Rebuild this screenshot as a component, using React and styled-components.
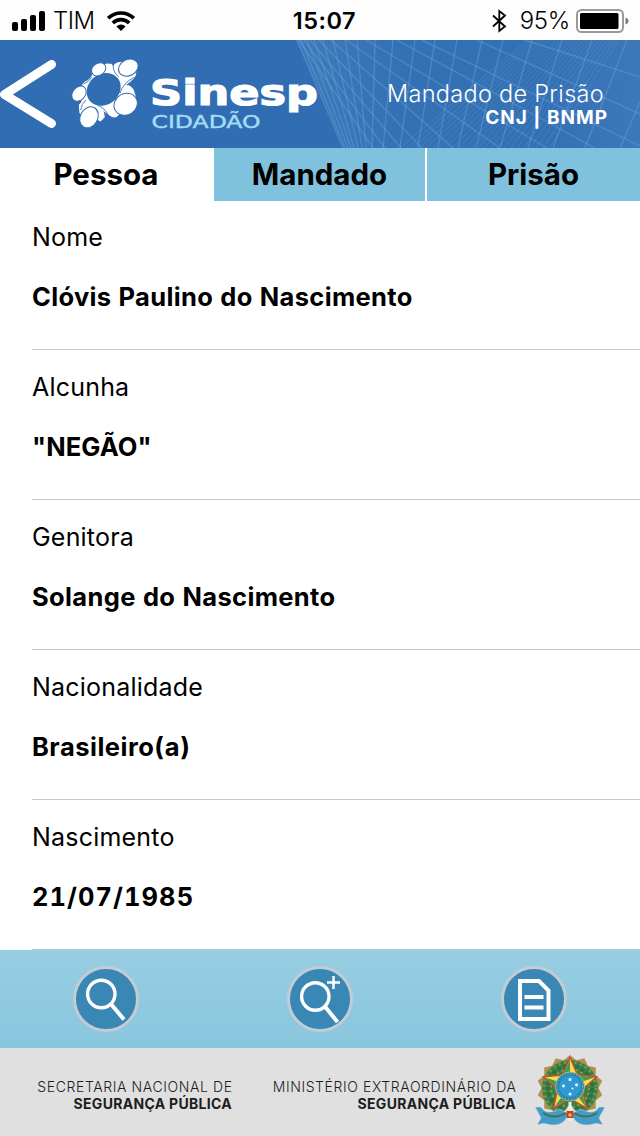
import React from "react";
import styled, { createGlobalStyle } from "styled-components";

const GlobalStyle = createGlobalStyle`
  * {
    box-sizing: border-box;
  }
  body {
    margin: 0;
    background: #fff;
    color: #000;
    font-family: Inter, "Liberation Sans", sans-serif;
  }
  svg {
    display: block;
    flex: none;
  }
`;

const Screen = styled.div`
  width: 640px;
  height: 1136px;
  display: flex;
  flex-direction: column;
  overflow: hidden;
`;

const StatusBar = styled.div`
  height: 40px;
  flex: none;
  display: grid;
  grid-template-columns: 1fr auto 1fr;
  align-items: center;
  padding: 0 11px 0 12px;
  background: #fdfdfd;
`;
const StatusGroup = styled.div`
  display: flex;
  align-items: center;
  justify-content: ${(props) => (props.$end ? "flex-end" : "flex-start")};
`;
const Carrier = styled.span`
  font-size: 24px;
  font-weight: 300;
  line-height: 40px;
  margin: 0 12px 0 8px;
  letter-spacing: -0.5px;
`;
const Clock = styled.span`
  font-size: 23.5px;
  font-weight: 600;
  line-height: 42px;
  letter-spacing: 0.5px;
  margin-left: 8px;
`;
const BatteryLevel = styled.span`
  font-size: 24px;
  font-weight: 300;
  line-height: 40px;
  letter-spacing: -0.3px;
  margin: 0 6px 0 13px;
`;

const HeaderBar = styled.header`
  height: 108px;
  flex: none;
  position: relative;
  display: flex;
  background: #316db2;
  color: #fff;
`;
const MeshLayer = styled.svg`
  position: absolute;
  top: 0;
  right: 0;
`;
const BackButton = styled.button`
  width: 70px;
  padding: 0;
  border: 0;
  background: none;
`;
const Brand = styled.div`
  display: flex;
`;
const Heading = styled.div`
  position: relative;
  flex: 1;
  text-align: right;
  padding: 40px 33px 0 0;
`;
const Title = styled.div`
  font-size: 23.5px;
  font-weight: 300;
  line-height: 28px;
  padding-right: 3px;
  letter-spacing: 0.3px;
`;
const Subtitle = styled.div`
  font-size: 19px;
  font-weight: 700;
  line-height: 19px;
  letter-spacing: 1px;
  margin-right: -1px;
`;

const Tabs = styled.nav`
  height: 53px;
  flex: none;
  display: grid;
  grid-template-columns: 212px 211px 213px;
  column-gap: 2px;
`;
const Tab = styled.button`
  border: 0;
  padding: 0;
  font-family: inherit;
  font-size: 29.5px;
  font-weight: 700;
  line-height: 53px;
  color: #000;
  background: ${(props) => (props.$active ? "#fff" : "#80c2dd")};
`;

const List = styled.main`
  flex: none;
  margin-top: -1px;
  padding-left: 32px;
`;
const Field = styled.div`
  height: 150px;
  padding-top: 22px;
  border-bottom: 1px solid #c8c7cc;
`;
const Label = styled.div`
  font-size: 25px;
  line-height: 30px;
  letter-spacing: 0.2px;
`;
const Value = styled.div`
  font-size: 25.5px;
  font-weight: 700;
  line-height: 30px;
  margin-top: 30px;
  letter-spacing: ${(props) => props.$spacing}px;
  font-variant-numeric: tabular-nums;
`;

const Toolbar = styled.div`
  height: 98px;
  flex: none;
  display: grid;
  grid-template-columns: repeat(3, 214px);
  justify-content: center;
  justify-items: center;
  align-items: center;
  background: linear-gradient(#97cde3, #89c6de);
`;
const RoundButton = styled.button`
  width: 66px;
  height: 66px;
  padding: 0;
  border: 3px solid #c3cbd3;
  border-radius: 50%;
  background: #3987b5;
`;

const FooterBar = styled.footer`
  height: 88px;
  flex: none;
  display: flex;
  background: #e0e0e0;
  color: #1d1d1f;
`;
const Department = styled.div`
  width: ${(props) => props.$width}px;
  padding-top: 30px;
  text-align: right;
  font-size: 14px;
  line-height: 17px;
  white-space: nowrap;
`;
const Thin = styled.div`
  font-weight: 350;
  letter-spacing: 0.6px;
  margin-right: -0.6px;
`;
const Strong = styled.div`
  font-weight: 700;
  letter-spacing: 0.3px;
`;
const Spacer = styled.div`
  width: 14px;
`;

const fields = [
  { label: "Nome", value: "Clóvis Paulino do Nascimento", spacing: 0.33 },
  { label: "Alcunha", value: '"NEGÃO"', spacing: 0.1 },
  { label: "Genitora", value: "Solange do Nascimento", spacing: 0.35 },
  { label: "Nacionalidade", value: "Brasileiro(a)", spacing: 0.5 },
  { label: "Nascimento", value: "21/07/1985", spacing: 1.05 },
];

const Signal = () => (
  <svg width="33" height="20" viewBox="0 0 33 20">
    <rect x="0" y="11" width="6" height="9" rx="2" />
    <rect x="9" y="8" width="6" height="12" rx="2" />
    <rect x="18" y="4" width="6" height="16" rx="2" />
    <rect x="27" y="0" width="6" height="20" rx="2" />
  </svg>
);

const Wifi = () => (
  <svg width="28" height="20" viewBox="0 0 28 20">
    <g fill="none" stroke="#000" strokeWidth="3.6">
      <path d="M1.2 7.2a18.2 18.2 0 0 1 25.6 0" />
      <path d="M5.8 12a11.6 11.6 0 0 1 16.4 0" />
    </g>
    <path d="M14 20l-4.6-4.6a6.5 6.5 0 0 1 9.2 0z" />
  </svg>
);

const Bluetooth = () => (
  <svg width="15" height="24" viewBox="0 0 15 24">
    <path
      d="M1 6.5l12 11L7.3 22V2L13 6.5 1 17.5"
      fill="none"
      stroke="#000"
      strokeWidth="1.8"
    />
  </svg>
);

const Battery = () => (
  <svg width="53" height="24" viewBox="0 0 53 24">
    <rect x="1" y="1" width="46" height="22" rx="4.5" fill="#fff" stroke="#9b9b9b" strokeWidth="2" />
    <rect x="4" y="4" width="38.5" height="16" rx="1.5" />
    <path d="M49.5 8.5c4 1.5 4 5.5 0 7z" fill="#777" />
  </svg>
);

// [x at the top edge, x at the bottom edge]
const steepLines = [
  [2, 48], [6, 50], [12, 53], [19, 56], [28, 59], [38, 63], [50, 67], [62, 71],
  [80, 77], [98, 88], [120, 105], [140, 123], [162, 143], [187, 163],
  [208, 181], [237, 205], [267, 233], [297, 258], [332, 290], [372, 325],
];
const slantedLines = [
  [4, 78], [9, 90], [15, 106], [24, 127], [36, 158], [51, 205], [71, 252],
  [102, 300], [127, 349], [182, 420], [230, 566],
];

const Mesh = () => (
  <MeshLayer width="345" height="108" viewBox="0 0 345 108">
    <defs>
      <linearGradient id="haze" x1="0" x2="1" y1="0" y2="0">
        <stop offset="0" stopColor="#5b97cf" stopOpacity="0.3" />
        <stop offset="0.3" stopColor="#5b97cf" stopOpacity="0.08" />
        <stop offset="0.7" stopColor="#5b97cf" stopOpacity="0.05" />
        <stop offset="1" stopColor="#5b97cf" stopOpacity="0.25" />
      </linearGradient>
    </defs>
    <path d="M1 0H345V108H48Q30 64 1 0z" fill="url(#haze)" />
    <g stroke="#6ba4d9" strokeOpacity="0.42" strokeWidth="1.4">
      {steepLines.concat(slantedLines).map(([top, bottom], i) => (
        <line key={i} x1={top} y1="0" x2={bottom} y2="108" />
      ))}
    </g>
    <g stroke="#6ba4d9" strokeOpacity="0.28">
      {Array.from({ length: 24 }, (_, i) => (
        <line key={i} x1={105 + i * 6.5} y1="108" x2={232 + i * 4} y2="0" />
      ))}
    </g>
  </MeshLayer>
);

const BackArrow = () => (
  <svg width="60" height="108" viewBox="0 0 60 108">
    <path
      d="M51.5 24.5L4.5 54.5L51.5 83.5"
      fill="none"
      stroke="#fff"
      strokeWidth="9"
      strokeLinecap="round"
      strokeLinejoin="round"
    />
  </svg>
);

const Ring = () => (
  <svg width="72" height="108" viewBox="30 -30 216 324">
    <path
      d="M72 98Q95 88 98 72L132 48L138 42L155 43L160 54Q160 38 185 37L228 60L226 76Q220 90 194 106Q212 105 220 120L226 140L170 200Q158 205 144 192L128 180Q136 203 130 205L121 213L108 205L60 190L58 165L64 158L76 125Q62 105 72 98Z"
      fill="#fff"
      stroke="#fff"
      strokeWidth="3"
    />
    <ellipse cx="131" cy="118" rx="54" ry="46" transform="rotate(-38 131 118)" fill="#316db2" />
    <g fill="none" stroke="#316db2" strokeWidth="2.5">
      <path d="M160 42Q157 66 176 80" />
      <path d="M222 82Q188 100 180 130" />
      <path d="M112 166Q134 172 146 198" />
      <path d="M70 102Q86 98 95 82" />
      <path d="M78 150Q64 162 62 180" />
    </g>
    <g fill="#fff" stroke="#316db2" strokeWidth="3">
      <ellipse cx="116" cy="58" rx="23" ry="18" transform="rotate(-35 116 58)" />
      <ellipse cx="205" cy="53" rx="31" ry="24" transform="rotate(-28 205 53)" />
      <ellipse cx="57" cy="131" rx="25" ry="19" transform="rotate(-50 57 131)" />
      <ellipse cx="197" cy="163" rx="36" ry="32" transform="rotate(-30 197 163)" />
      <ellipse cx="87" cy="202" rx="33" ry="26" transform="rotate(-60 87 202)" />
    </g>
  </svg>
);

const Wordmark = () => (
  <svg width="182" height="108" viewBox="142 40 182 108" fontFamily="DejaVu Sans">
    <text
      x="150"
      y="104.5"
      fontSize="36"
      fontWeight="700"
      fill="#fff"
      stroke="#fff"
      strokeWidth="1.2"
      textLength="168"
      lengthAdjust="spacingAndGlyphs"
    >
      Sinesp
    </text>
    <text
      x="151.5"
      y="127.5"
      fontSize="17"
      fill="#a3dcf7"
      stroke="#a3dcf7"
      strokeWidth="0.4"
      textLength="109"
      lengthAdjust="spacingAndGlyphs"
    >
      CIDADÃO
    </text>
  </svg>
);

const SearchIcon = () => (
  <svg width="60" height="60" viewBox="0 0 60 60" fill="none" stroke="#fff">
    <circle cx="25.3" cy="25" r="13.7" strokeWidth="3.4" />
    <path d="M34.5 34.5L48 50.5" strokeWidth="4" />
  </svg>
);

const SearchPlusIcon = () => (
  <svg width="60" height="60" viewBox="0 0 60 60" fill="none" stroke="#fff">
    <circle cx="25.3" cy="27.5" r="13.7" strokeWidth="3.4" />
    <path d="M34.5 37L47.5 53" strokeWidth="4" />
    <path d="M43.5 7v13M37 13.5h13" strokeWidth="2.4" />
  </svg>
);

const DocumentIcon = () => (
  <svg width="60" height="60" viewBox="0 0 60 60" fill="none" stroke="#fff" strokeWidth="4">
    <path d="M16 12H35L44.5 21.5V50H16z" />
    <path d="M20.5 28H39.5M20.5 38.5H39.5" />
  </svg>
);

const starPoints = (cx, cy, outer, inner, count) =>
  Array.from({ length: count * 2 }, (_, i) => {
    const r = i % 2 ? inner : outer;
    const a = (Math.PI * i) / count - Math.PI / 2;
    return `${(cx + r * Math.cos(a)).toFixed(1)},${(cy + r * Math.sin(a)).toFixed(1)}`;
  }).join(" ");

// each arm of the star is split lengthwise, the left half is drawn green
const armHalves = [0, 1, 2, 3, 4].map((i) => {
  const point = (r, turn) => {
    const a = (Math.PI * 2 * (i + turn)) / 5 - Math.PI / 2;
    return `${(570 + r * Math.cos(a)).toFixed(1)} ${(1085.5 + r * Math.sin(a)).toFixed(1)}`;
  };
  return `M570 1085.5L${point(26, 0)}L${point(12.5, -0.5)}Z`;
});

const Arms = () => (
  <svg width="80" height="88" viewBox="530 1048 80 88">
    <polygon points={starPoints(570, 1088, 33, 28.5, 14)} fill="#ad9150" />
    <circle cx="570" cy="1088" r="28" fill="#3f7f46" />
    <circle cx="570" cy="1088" r="26" fill="none" stroke="#6c9a52" strokeWidth="3" strokeDasharray="2 3.5" />
    <circle cx="570" cy="1088" r="22" fill="none" stroke="#2f7040" strokeWidth="4" strokeDasharray="4 2" />
    <circle cx="570" cy="1088" r="19" fill="none" stroke="#72a860" strokeWidth="2" strokeDasharray="2 3" />
    <path d="M562 1114L570 1104L578 1114V1124H562Z" fill="#e0e0e0" />
    <g fill="#429cc8" stroke="#e0e0e0" strokeWidth="0.5">
      <path d="M535 1107L541 1107Q546 1116 560 1109L568 1114Q565 1126 551 1125Q543 1122 537 1125L541 1118Z" />
      <path d="M605 1107L599 1107Q594 1116 580 1109L572 1114Q575 1126 589 1125Q597 1122 603 1125L599 1118Z" />
    </g>
    <path
      d="M543 1113Q554 1120 566 1113M597 1113Q586 1120 574 1113"
      stroke="#41734e"
      strokeWidth="2"
      fill="none"
    />
    <path d="M570 1102V1121" stroke="#f6f2e8" strokeWidth="3" />
    <path d="M566.5 1111h7v7h-7z" fill="#c93b2c" />
    <path d="M568.5 1113.5h3v3h-3z" fill="#e9c635" />
    <polygon
      points={starPoints(570, 1085.5, 28, 13, 5)}
      fill="#f4e04a"
      stroke="#cc4a30"
      strokeWidth="1.4"
    />
    <path d={armHalves.join("")} fill="#459c50" />
    <circle cx="570" cy="1086.5" r="14.5" fill="#287fae" stroke="#c9cd6a" strokeWidth="0.8" />
    <circle cx="570" cy="1086.5" r="12.7" fill="none" stroke="#a6d5e7" strokeDasharray="1 2" />
    <circle cx="570" cy="1086.5" r="11" fill="#2d9bd2" />
    <g fill="#fff">
      <circle cx="570" cy="1079.5" r="1.5" />
      <circle cx="563.5" cy="1086" r="1.4" />
      <circle cx="576.5" cy="1085" r="1.4" />
      <circle cx="572.5" cy="1088.5" r="0.9" />
      <circle cx="570" cy="1094" r="1.5" />
    </g>
  </svg>
);

const App = () => {
  return (
    <>
      <GlobalStyle />
      <Screen>
        <StatusBar>
          <StatusGroup>
            <Signal />
            <Carrier>TIM</Carrier>
            <Wifi />
          </StatusGroup>
          <Clock>15:07</Clock>
          <StatusGroup $end>
            <Bluetooth />
            <BatteryLevel>95%</BatteryLevel>
            <Battery />
          </StatusGroup>
        </StatusBar>
        <HeaderBar>
          <Mesh />
          <BackButton aria-label="Voltar">
            <BackArrow />
          </BackButton>
          <Brand>
            <Ring />
            <Wordmark />
          </Brand>
          <Heading>
            <Title>Mandado de Prisão</Title>
            <Subtitle>CNJ | BNMP</Subtitle>
          </Heading>
        </HeaderBar>
        <Tabs>
          <Tab $active>Pessoa</Tab>
          <Tab>Mandado</Tab>
          <Tab>Prisão</Tab>
        </Tabs>
        <List>
          {fields.map((field) => (
            <Field key={field.label}>
              <Label>{field.label}</Label>
              <Value $spacing={field.spacing}>{field.value}</Value>
            </Field>
          ))}
        </List>
        <Toolbar>
          <RoundButton>
            <SearchIcon />
          </RoundButton>
          <RoundButton>
            <SearchPlusIcon />
          </RoundButton>
          <RoundButton>
            <DocumentIcon />
          </RoundButton>
        </Toolbar>
        <FooterBar>
          <Department $width={232}>
            <Thin>SECRETARIA NACIONAL DE</Thin>
            <Strong>SEGURANÇA PÚBLICA</Strong>
          </Department>
          <Department $width={284}>
            <Thin>MINISTÉRIO EXTRAORDINÁRIO DA</Thin>
            <Strong>SEGURANÇA PÚBLICA</Strong>
          </Department>
          <Spacer />
          <Arms />
        </FooterBar>
      </Screen>
    </>
  );
};

export default App;
